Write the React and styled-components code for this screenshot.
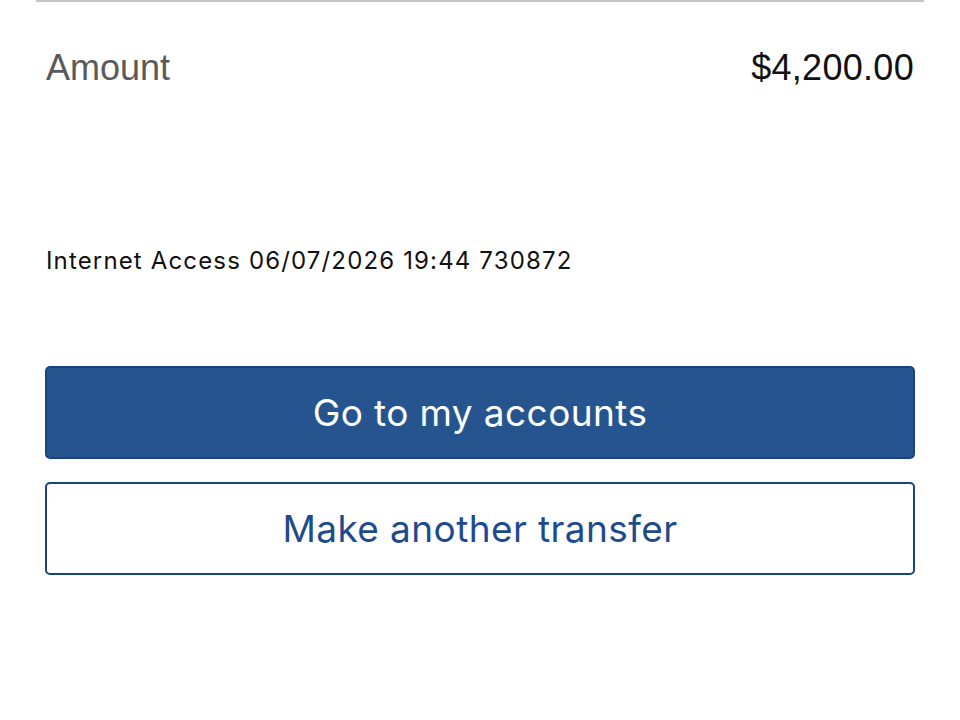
import React from "react";
import styled, { createGlobalStyle } from "styled-components";

const GlobalStyle = createGlobalStyle`
  html, body {
    margin: 0;
    padding: 0;
    background: #ffffff;
  }
`;

// Page wrapper
const Page = styled.div`
  width: 960px;
  height: 720px;
  padding: 0 45px;
  box-sizing: border-box;
  display: flex;
  flex-direction: column;
`;

const Divider = styled.div`
  height: 2px;
  background: #c4c4c4;
  margin: 0 -9px;
`;

const AmountRow = styled.div`
  display: flex;
  align-items: baseline;
  justify-content: space-between;
  padding: 45px 1px 0 1px;
  font-family: "Liberation Sans", Arial, sans-serif;
  font-size: 36px;
  line-height: 42px;
`;

const Label = styled.span`
  color: #5a5a5a;
`;

const Value = styled.span`
  color: #111111;
  letter-spacing: 0.3px;
`;

const Reference = styled.div`
  margin-top: 157px;
  padding-left: 1px;
  font-family: Inter, "Noto Sans", sans-serif;
  font-size: 24px;
  line-height: 30px;
  letter-spacing: 1.15px;
  color: #111111;
`;

const Actions = styled.div`
  display: flex;
  flex-direction: column;
  gap: 23px;
  margin-top: 90px;
`;

const Button = styled.button`
  width: 100%;
  height: 93px;
  box-sizing: border-box;
  border-radius: 5px;
  border: 2px solid #1b437f;
  background: ${({ $primary }) => ($primary ? "#26548f" : "#ffffff")};
  color: ${({ $primary }) => ($primary ? "#ffffff" : "#1f4b8c")};
  font-family: Inter, "Noto Sans", sans-serif;
  font-size: 37px;
  letter-spacing: 0.4px;
  cursor: pointer;
`;

const App = () => {
  return (
    <>
      <GlobalStyle />
      <Page>
        <Divider />
        <AmountRow>
          <Label>Amount</Label>
          <Value>$4,200.00</Value>
        </AmountRow>
        <Reference>Internet Access 06/07/2026 19:44 730872</Reference>
        <Actions>
          <Button $primary>Go to my accounts</Button>
          <Button>Make another transfer</Button>
        </Actions>
      </Page>
    </>
  );
};

export default App;
